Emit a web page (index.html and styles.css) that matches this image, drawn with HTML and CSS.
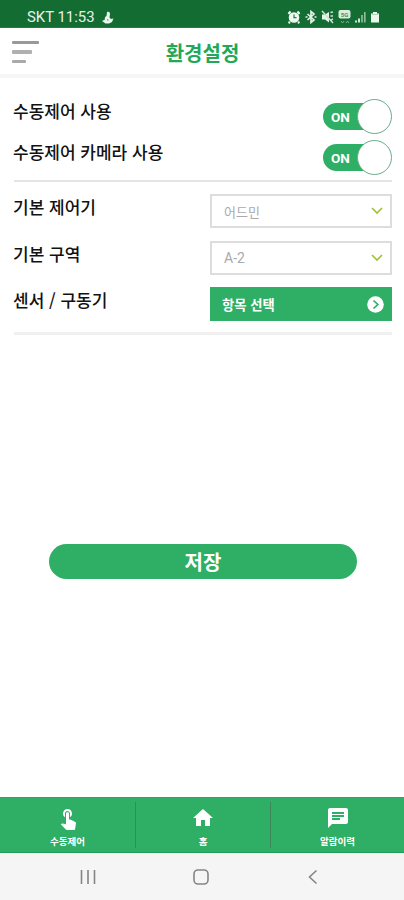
FILE: index.html
```html
<!DOCTYPE html>
<html lang="ko">
<head>
<meta charset="utf-8">
<meta name="viewport" content="width=device-width, initial-scale=1">
<title>환경설정</title>
<link rel="stylesheet" href="styles.css">
</head>
<body>
<div class="status">
  <span class="carrier">SKT 11:53</span>
  <svg class="flame" width="12" height="13" viewBox="0 0 12 13"><path d="M5 1C9 0 8 4 7.500 6.500L9 8l2.500-.5L10 11l-3 1.500H3.500L0 10l3-1.500Q2 6.500 4.500 5Z" fill="#e9f4ec"/><path d="M5.500 8 6 10" stroke="#68a77a"/></svg>
  <div class="status-icons">
    <svg width="14" height="14" viewBox="0 0 14 14"><path d="m1.500 4 2-2.500m9 2.500-2-2.500M3 12l-1.500 1M11 12l1.500 1" stroke="#eef7f0" stroke-width="2.200"/><circle cx="7" cy="7.500" r="5.300" fill="#eef7f0"/><path d="M7 4.500v3.200h2.500" fill="none" stroke="#237b40" stroke-width="1.200"/></svg>
    <svg width="12" height="14" viewBox="0 0 12 14"><path d="m2.500 4 6.500 6-3 2.500v-11L9 4l-6.500 6M.5 7h2m7 0h2" fill="none" stroke="#e0f0e4" stroke-width="1.700"/></svg>
    <svg width="13" height="14" viewBox="0 0 13 14"><path d="M1 4.500h3L8 2v10.500L4 9.500H1Z" fill="#e5f3e8"/><path d="m1 1 11 12M9.500 2.500l2.500-.5m-2.500 4H12m-2 4 2-1" stroke="#cbe3d1" stroke-width="1.500"/></svg>
    <svg class="network" width="13" height="16" viewBox="0 0 13 16"><rect x=".5" y="1" width="12" height="8.500" rx="2" fill="#d9ecdd"/><text x="6.500" y="7.700" text-anchor="middle">5G</text><path d="m3 12 1.500 2L6 12m2 2 1.500-2 1.500 2" fill="none" stroke="#7cb18a"/></svg>
    <svg width="11" height="14" viewBox="0 0 11 14"><path d="M1 12.500v-2m3 2v-4" stroke="#d4e8d9" stroke-width="2"/><path d="M7 12.500V5m2.800 7.500V2" stroke="#8cbd99" stroke-width="1.700"/></svg>
    <svg width="10" height="14" viewBox="0 0 10 14"><path d="M3 2h4v1.500h2v9H1v-9h2Z" fill="#edf7ef"/><path d="M2 4.500h6" stroke="#b0d2b9"/></svg>
  </div>
</div>
<header class="header">
  <div class="menu"><i></i><i></i><i></i></div>
  <h1>환경설정</h1>
</header>
<main>
  <section class="toggles">
    <div class="toggle-row"><span class="label">수동제어 사용</span><div class="toggle"><span>ON</span><i></i></div></div>
    <div class="toggle-row"><span class="label">수동제어 카메라 사용</span><div class="toggle"><span>ON</span><i></i></div></div>
  </section>
  <section class="fields">
    <div class="field"><span class="label">기본 제어기</span><div class="select"><span>어드민</span><svg width="12" height="8" viewBox="0 0 12 8"><path d="m1 1 5 5 5-5"/></svg></div></div>
    <div class="field"><span class="label">기본 구역</span><div class="select"><span class="latin">A-2</span><svg width="12" height="8" viewBox="0 0 12 8"><path d="m1 1 5 5 5-5"/></svg></div></div>
    <div class="field"><span class="label">센서 / 구동기</span><div class="select pick"><span>항목 선택</span><svg width="17" height="17" viewBox="0 0 17 17"><circle cx="8.500" cy="8.500" r="8.300" fill="#fff"/><path d="m6.500 4.500 4.300 4-4.300 4"/></svg></div></div>
  </section>
  <div class="save">저장</div>
</main>
<nav class="tabs">
  <div class="tab"><svg width="24" height="24" viewBox="0 0 24 24"><path d="M9 11.240V7.500a2.500 2.500 0 0 1 5 0v3.740c1.210-.81 2-2.180 2-3.740C16 5.010 13.990 3 11.500 3S7 5.010 7 7.500c0 1.560.79 2.930 2 3.740zm9.840 4.630-4.540-2.260c-.17-.07-.35-.11-.54-.11H13v-6a1.500 1.500 0 0 0-3 0v10.740l-3.430-.72c-.33-.07-.65.04-.86.25l-.79.8 4.940 4.940c.27.27.65.44 1.060.44h6.790c.75 0 1.330-.55 1.440-1.280l.75-5.270c.1-.67-.27-1.270-1.060-1.530z"/></svg><span>수동제어</span></div>
  <div class="tab"><svg width="24" height="24" viewBox="0 0 24 24"><path d="M10 20v-6h4v6h5v-8h3L12 3 2 12h3v8z"/></svg><span>홈</span></div>
  <div class="tab"><svg width="24" height="24" viewBox="0 0 24 24"><path d="M20 2H4c-1.100 0-2 .9-2 2v18l4-4h14c1.100 0 2-.9 2-2V4c0-1.100-.9-2-2-2zM6 9h12v2H6V9zm8 5H6v-2h8v2zm4-6H6V6h12v2z"/></svg><span>알람이력</span></div>
</nav>
<div class="system">
  <svg width="16" height="16" viewBox="0 0 16 16"><path d="M1.500 1v14M8 1v14m6.500-14v14"/></svg>
  <svg width="16" height="16" viewBox="0 0 16 16"><rect x="1" y="1" width="14" height="14" rx="4"/></svg>
  <svg width="16" height="16" viewBox="0 0 16 16"><path d="M11.500 1.500 4.500 8l7 6.500"/></svg>
</div>
</body>
</html>
```
FILE: styles.css
```css
* { box-sizing: border-box; }
body {
  margin: 0;
  height: 900px;
  display: flex;
  flex-direction: column;
  background: #fff;
  color: #111;
  font-family: "Noto Sans CJK KR", sans-serif;
  overflow: hidden;
}
svg { display: block; flex: none; }
.status {
  height: 28px;
  flex: none;
  padding: 7px 24px 0 27px;
  display: flex;
  align-items: center;
  background: #136c31;
  border-bottom: 1px solid #2b7a45;
  color: #e6f2e9;
}
.carrier { width: 69px; font: 14.900px/20px Roboto, sans-serif; white-space: nowrap; }
.flame { margin-left: 6px; }
.status-icons { margin-left: auto; display: flex; align-items: center; gap: 4px; }
.network text { font: bold 6px Roboto, sans-serif; fill: #4b8e60; }
.header {
  height: 50px;
  flex: none;
  display: grid;
  grid-template-columns: 60px 1fr 60px;
  align-items: center;
  border-bottom: 4px solid #f6f6f6;
}
.menu { display: flex; flex-direction: column; gap: 6px; padding: 2px 0 0 12px; }
.menu i { width: 27px; height: 3px; border-radius: 1px; background: #999; }
.menu i:nth-child(2) { width: 20px; height: 4px; background: #b0b0b0; }
.menu i:nth-child(3) { width: 14px; background: #aaa; }
h1 { margin: 3px 0 0 1px; text-align: center; font-size: 20px; line-height: 28px; color: #23a85a; }
main { flex: 1; padding: 0 12px 0 14px; display: flex; flex-direction: column; }
.label { margin-left: -1px; font-size: 17px; line-height: 24px; font-weight: 500; white-space: nowrap; }
.toggles { padding-top: 21px; height: 104px; border-bottom: 2px solid #e4e4e4; }
.toggle-row { height: 41px; display: flex; justify-content: space-between; align-items: flex-start; }
.toggle-row + .toggle-row { height: 40px; }
.toggle { width: 69px; height: 35px; display: flex; align-items: center; }
.toggle span {
  width: 50px;
  height: 27px;
  padding-left: 8px;
  border-radius: 14px 0 0 14px;
  background: #2eaf65;
  color: #fff;
  font: bold 13.500px/28px Roboto, sans-serif;
}
.toggle i { width: 35px; height: 35px; margin-left: -16px; border: 1px solid #6aac8a; border-radius: 50%; background: #fff; }
.fields { height: 153px; padding-top: 12px; border-bottom: 3px solid #f0f0f0; }
.field { height: 46.500px; display: flex; justify-content: space-between; align-items: flex-start; }
.field .label { padding-top: 1px; }
.select {
  width: 182px;
  height: 34px;
  padding: 0 7px 0 12px;
  display: flex;
  align-items: center;
  justify-content: space-between;
  border: 2px solid #ddd;
  color: #aaa;
  font-size: 13px;
}
.select path { fill: none; stroke: #a3c23a; stroke-width: 1.700; }
.select .latin { font: 14px/20px Roboto, sans-serif; }
.pick { border: 0; padding: 0 8px 0 12px; background: #2eaf65; color: #fff; font-size: 13.300px; font-weight: 700; }
.pick path { stroke: #2eaf65; }
.save {
  width: 308px;
  height: 35px;
  margin: 209px 0 0 35px;
  border-radius: 18px;
  background: #2eaf65;
  color: #fff;
  text-align: center;
  font-size: 20px;
  font-weight: 700;
  line-height: 36px;
}
.tabs {
  height: 56px;
  flex: none;
  padding: 4px 0 6px;
  display: grid;
  grid-template-columns: 136px 135px 1fr;
  background: #2eaf65;
  border-top: 1px solid #38a568;
  border-bottom: 1px solid #229d55;
}
.tab { display: flex; flex-direction: column; align-items: center; padding-top: 4px; border-right: 1px solid #3f865d; color: #fff; }
.tab:last-child { border: 0; }
.tab path { fill: #fff; }
.tab span { font-size: 9.500px; line-height: 14px; font-weight: 700; margin-top: 4px; }
.system {
  height: 47px;
  flex: none;
  padding: 0 83px 0 80px;
  display: flex;
  align-items: center;
  justify-content: space-between;
  background: #f5f5f5;
}
.system svg { fill: none; stroke: #858585; stroke-width: 1.600; }
```
